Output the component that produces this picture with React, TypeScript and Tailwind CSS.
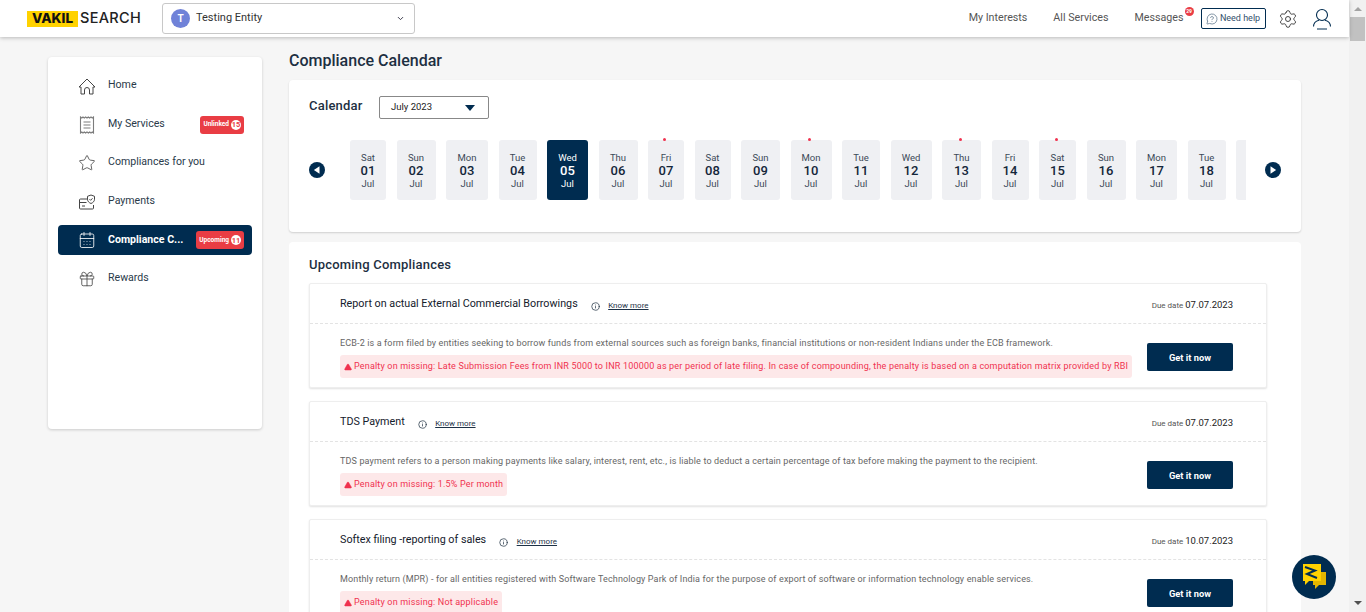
import React from 'react';
import { CalendarDays, ChevronDown, Gift, Info, MessageCircleQuestion, Settings, Star, TriangleAlert } from 'lucide-react';

const navItems = [
  { icon: HomeIcon, label: 'Home' },
  { icon: ServicesIcon, label: 'My Services', badge: 'Unlinked', count: '15' },
  { icon: Star, label: 'Compliances for you' },
  { icon: PaymentsIcon, label: 'Payments' },
  { icon: CalendarDays, label: 'Compliance C...', badge: 'Upcoming', count: '11', active: true },
  { icon: Gift, label: 'Rewards' },
];

const days = [
  { day: 'Sat', date: '01', width: 'w-[36px]' },
  { day: 'Sun', date: '02', width: 'w-[39px]' },
  { day: 'Mon', date: '03', width: 'w-[42px]' },
  { day: 'Tue', date: '04', width: 'w-[38px]' },
  { day: 'Wed', date: '05', width: 'w-[41px]', active: true },
  { day: 'Thu', date: '06', width: 'w-[39px]' },
  { day: 'Fri', date: '07', width: 'w-[36px]', dot: true },
  { day: 'Sat', date: '08', width: 'w-[36px]' },
  { day: 'Sun', date: '09', width: 'w-[39px]' },
  { day: 'Mon', date: '10', width: 'w-[41px]', dot: true },
  { day: 'Tue', date: '11', width: 'w-[38px]' },
  { day: 'Wed', date: '12', width: 'w-[41px]' },
  { day: 'Thu', date: '13', width: 'w-[39px]', dot: true },
  { day: 'Fri', date: '14', width: 'w-[37px]' },
  { day: 'Sat', date: '15', width: 'w-[37px]', dot: true },
  { day: 'Sun', date: '16', width: 'w-[39px]' },
  { day: 'Mon', date: '17', width: 'w-[41px]' },
  { day: 'Tue', date: '18', width: 'w-[38px]' },
  { day: '', date: '', width: 'w-[40px]' },
];

const compliances = [
  {
    title: 'Report on actual External Commercial Borrowings',
    due: '07.07.2023',
    text: 'ECB-2 is a form filed by entities seeking to borrow funds from external sources such as foreign banks, financial institutions or non-resident Indians under the ECB framework.',
    penalty: 'Late Submission Fees from INR 5000 to INR 100000 as per period of late filing. In case of compounding, the penalty is based on a computation matrix provided by RBI',
  },
  {
    title: 'TDS Payment',
    due: '07.07.2023',
    text: 'TDS payment refers to a person making payments like salary, interest, rent, etc., is liable to deduct a certain percentage of tax before making the payment to the recipient.',
    penalty: '1.5% Per month',
  },
  {
    title: 'Softex filing -reporting of sales',
    due: '10.07.2023',
    text: 'Monthly return (MPR) - for all entities registered with Software Technology Park of India for the purpose of export of software or information technology enable services.',
    penalty: 'Not applicable',
  },
];

type IconProps = { className?: string; strokeWidth?: number };

function HomeIcon({ className }: IconProps) {
  return (
    <svg viewBox="0 0 18 18" fill="none" stroke="currentColor" strokeWidth="1" strokeLinejoin="round" className={className}>
      <path d="M1 10L9 2l8 8h-2v7h-3.500v-4a2.500 2.500 0 0 0-5 0v4H3v-7z" />
    </svg>
  );
}

function ServicesIcon({ className }: IconProps) {
  return (
    <svg viewBox="0 0 18 18" fill="none" stroke="#7c7c7c" strokeWidth="1.1" className={className}>
      <path d="M2.500 1l1.300 1L5 1l1.300 1 1.300-1 1.400 1 1.300-1 1.300 1L13 1l1.300 1 1.200-1v16l-1.200-1-1.300 1-1.300-1-1.300 1L9 16l-1.400 1-1.300-1L5 17l-1.200-1-1.300 1z" />
      <path d="M5.500 6h7M5.500 9h7M5.500 12h7" />
    </svg>
  );
}

function PaymentsIcon({ className }: IconProps) {
  return (
    <svg viewBox="0 0 18 18" fill="none" stroke="currentColor" strokeWidth="1" className={className}>
      <path d="M10 6H2.500A1 1 0 0 0 1.500 7v8a1 1 0 0 0 1 1h12a1 1 0 0 0 1-1v-3" />
      <path d="M1.500 9.500h7M4 13h3" />
      <path d="M13 2l3.500 1.300v2.900c0 2.100-1.500 3.500-3.500 4.300-2-.8-3.500-2.200-3.500-4.300V3.300z" />
      <path d="M11.500 6.200l1.100 1.100 1.900-2" />
    </svg>
  );
}

function UserIcon() {
  return (
    <svg viewBox="0 0 20 22" fill="none" stroke="#002c50" strokeWidth="1.1" className="ml-[14px] w-5 h-[22px]">
      <circle cx="10" cy="7" r="5.500" />
      <path d="M1.500 18.500c0-3.500 2.500-5.500 5.500-6.300M18.500 18.500c0-3.500-2.500-5.500-5.500-6.300M5 21h10" />
    </svg>
  );
}

function ArrowButton({ left }: { left?: boolean }) {
  return (
    <div className="w-4 h-4 rounded-full bg-[#002c50] flex items-center justify-center shrink-0">
      <svg viewBox="0 0 8 8" className="w-[10px] h-[10px] fill-white">
        <path d={left ? 'M6 1v6L1.500 4z' : 'M2 1v6l4.500-3z'} />
      </svg>
    </div>
  );
}

function Sidebar() {
  return (
    <aside className="w-[214px] h-[372px] mt-5 ml-12 shrink-0 bg-white rounded shadow-[0_1px_3px_rgba(0,0,0,0.18)] px-[10px] pt-[14px]">
      {navItems.map((item) => (
        <div
          key={item.label}
          className={`h-[30px] mb-[8.6px] rounded flex items-center pl-5 pr-2 ${item.active ? 'bg-[#002c50] text-white' : 'text-[#2a3a4a]'}`}
        >
          <item.icon className={`w-[18px] h-[18px] shrink-0 ${item.active ? 'text-white' : 'text-[#444]'}`} strokeWidth={1.1} />
          <span className={`ml-3 text-[10.6px] ${item.active ? 'font-bold' : '-mt-[2px]'}`}>{item.label}</span>
          {item.badge && (
            <span className="ml-auto h-[18px] rounded-[3px] bg-[#e93d44] text-white text-[6.5px] font-bold flex items-center px-[3px] gap-[2px]">
              {item.badge}
              <span className="w-[10px] h-[10px] rounded-full bg-white text-[#e93d44] flex items-center justify-center text-[7.500px] leading-none">{item.count}</span>
            </span>
          )}
        </div>
      ))}
    </aside>
  );
}

function CalendarCard() {
  return (
    <section className="h-[152px] bg-white rounded shadow-[0_1px_2px_rgba(0,0,0,0.16)] pl-5 pr-5 pt-4">
      <div className="flex items-center">
        <h2 className="w-[70px] -mt-[4px] text-[13px] font-medium text-[#1d2f42] tracking-[0.2px]">Calendar</h2>
        <div className="w-[110px] h-[23px] rounded-[2px] border border-[#888] flex items-center justify-between pl-[11px] pr-[13px] text-[9.5px] text-[#222]">
          July 2023
          <svg viewBox="0 0 10 6" className="w-[10px] h-[6px] fill-[#002c50]">
            <path d="M0 0h10L5 6z" />
          </svg>
        </div>
      </div>
      <div className="flex items-center mt-[21px]">
        <ArrowButton left />
        <div className="w-[896px] ml-[25px] overflow-hidden -mt-[4px] pt-[4px] flex gap-[10.5px] shrink-0">
          {days.map((d) => (
            <div
              key={d.date || 'next'}
              className={`relative h-[60px] shrink-0 ${d.width} rounded-[3px] flex flex-col items-center justify-center ${d.active ? 'bg-[#002c50] text-white' : 'bg-[#eff0f3] text-[#3c4a58]'}`}
            >
              {d.dot && <span className="absolute -top-[2px] -ml-[3px] w-[3px] h-[3px] rounded-full bg-[#f0324f]" />}
              <span className="text-[9.5px] leading-[13px]">{d.day}</span>
              <span className={`text-[13px] leading-[13px] font-medium ${d.active ? 'text-white' : 'text-[#14263a]'}`}>{d.date}</span>
              <span className="text-[9.5px] leading-[13px]">{d.day ? 'Jul' : ''}</span>
            </div>
          ))}
        </div>
        <div className="ml-[19px]">
          <ArrowButton />
        </div>
      </div>
    </section>
  );
}

function ComplianceCard({ item }: { item: (typeof compliances)[number] }) {
  return (
    <div className="w-[958px] h-[105px] mb-[13px] shrink-0 bg-white rounded-[2px] border border-[#eeeeee] shadow-[0_1px_2px_rgba(0,0,0,0.12)]">
      <div className="h-[40px] border-b border-dashed border-[#e3e3e3] flex items-center pl-[30px] pr-[33px]">
        <span className="mt-[1px] text-[10.75px] text-[#14202c]">{item.title}</span>
        <Info className="w-[9px] h-[9px] ml-[13px] mt-[5px] text-[#2a3a4a]" strokeWidth={2} />
        <a className="ml-[8.5px] mt-[5px] text-[8px] text-[#1d3146] underline underline-offset-1">Know more</a>
        <span className="ml-auto mt-[3px] text-[8px] text-[#555] flex items-baseline gap-[2px]">
          Due date
          <span className="text-[9.5px] text-[#222]">{item.due}</span>
        </span>
      </div>
      <div className="flex pl-[30px] pr-[33px] pt-[12px]">
        <div className="flex-1 min-w-0 pr-[15px]">
          <p className="text-[9px] leading-[14px] text-[#666] tracking-[0.14px] whitespace-nowrap">{item.text}</p>
          <div className="mt-[5px] inline-flex items-center h-[23px] rounded-[3px] bg-[#fde8e9] px-[4px] text-[9px] text-[#f0324f] tracking-[0.18px] whitespace-nowrap">
            <TriangleAlert className="w-[8px] h-[8px] mr-[2px] fill-[#f0324f] text-[#f0324f]" strokeWidth={1.5} />
            Penalty on missing: {item.penalty}
          </div>
        </div>
        <button className="w-[86px] h-[28px] mt-[7px] pt-[2px] shrink-0 rounded-[2px] bg-[#002c50] text-white text-[9.3px] font-bold">Get it now</button>
      </div>
    </div>
  );
}

function Scrollbar() {
  return (
    <div className="w-[17px] h-full shrink-0 bg-[#f1f1f1] flex flex-col items-center justify-between relative">
      <div className="w-full flex flex-col items-center">
        <svg viewBox="0 0 8 4" className="w-2 h-1 mt-[7px] fill-[#a3a3a3]"><path d="M4 0l4 4H0z" /></svg>
        <div className="w-[15px] h-[24px] mt-[6px] bg-[#c1c1c1]" />
      </div>
      <svg viewBox="0 0 8 4" className="w-2 h-1 mb-[7px] fill-[#505050]"><path d="M0 0h8L4 4z" /></svg>
    </div>
  );
}

export default function App() {
  return (
    <div className="relative w-full h-[612px] overflow-hidden flex bg-[#f6f6f6] font-['Roboto',sans-serif]">
      <div className="flex-1 min-w-0 flex flex-col">
        {/* Top bar */}
        <header className="h-[37px] shrink-0 bg-white shadow-[0_1px_4px_rgba(0,0,0,0.25)] flex items-center pl-[27px] pr-[17px] z-10">
          <div className="flex items-center w-[135px] font-['Inter',sans-serif] leading-none">
            <span className="bg-[#ffd200] text-[#111] text-[13.5px] font-extrabold h-[16px] w-[51px] flex items-center justify-center">VAKIL</span>
            <span className="ml-[2px] text-[#222] text-[14.5px] font-medium tracking-[0.3px]">SEARCH</span>
          </div>
          <div className="h-[31px] w-[253px] rounded-[3px] border border-[#c8c8c8] flex items-center pl-[8px] pr-[9px]">
            <span className="w-[19px] h-[19px] rounded-full bg-[#7082d8] text-white text-[10px] font-bold flex items-center justify-center">T</span>
            <span className="ml-[6px] text-[11px] text-[#333] -mt-[1px]">Testing Entity</span>
            <ChevronDown className="ml-auto w-[9px] h-[9px] text-[#334]" strokeWidth={2.5} />
          </div>
          <nav className="ml-auto flex items-center text-[10.7px] text-[#555]">
            <span>My Interests</span>
            <span className="ml-[26px]">All Services</span>
            <span className="ml-[26px] relative">
              Messages
              <span className="absolute -top-[3px] -right-[10px] w-[9px] h-[9px] rounded-full bg-[#e93d44] text-white text-[5px] font-bold flex items-center justify-center">29</span>
            </span>
          </nav>
          <div className="ml-[17px] h-[21px] w-[65px] rounded-[2px] border border-[#002c50] flex items-center justify-center gap-[2px] text-[9px] text-[#33506b]">
            <MessageCircleQuestion className="w-[12px] h-[12px]" strokeWidth={1.2} />
            Need help
          </div>
          <Settings className="ml-[12.5px] w-5 h-5 text-[#333]" strokeWidth={1.1} />
          <UserIcon />
        </header>

        <div className="flex-1 min-h-0 flex">
          <Sidebar />
          <main className="w-[1012px] ml-[27px] shrink-0">
            <h1 className="h-[43px] pt-[13px] text-[16px] leading-[22px] font-medium text-[#1d2f42]">Compliance Calendar</h1>
            <CalendarCard />
            <section className="mt-[10px] h-[400px] bg-white rounded pl-[20px] pt-[14px]">
              <h2 className="h-[27px] text-[13px] leading-[17px] font-medium text-[#1d2f42] tracking-[0.2px]">Upcoming Compliances</h2>
              {compliances.map((item) => (
                <ComplianceCard key={item.title} item={item} />
              ))}
            </section>
          </main>
        </div>
      </div>
      <Scrollbar />

      {/* Chat launcher */}
      <div className="absolute left-[1292px] top-[555px] w-11 h-11 rounded-full bg-[#002c50] flex items-center justify-center">
        <svg viewBox="0 0 38 38" className="w-[38px] h-[38px]">
          <path d="M26 14h5v13h-7l-4 4v-4h-2v-4h8z" fill="#e3b600" />
          <path d="M8 6h18v17H14l-4 4v-4H8z" fill="#ffd200" />
          <path d="M10 9l10 3.500-8 3.500 10 4" fill="none" stroke="#002c50" strokeWidth="2" />
        </svg>
      </div>
    </div>
  );
}
